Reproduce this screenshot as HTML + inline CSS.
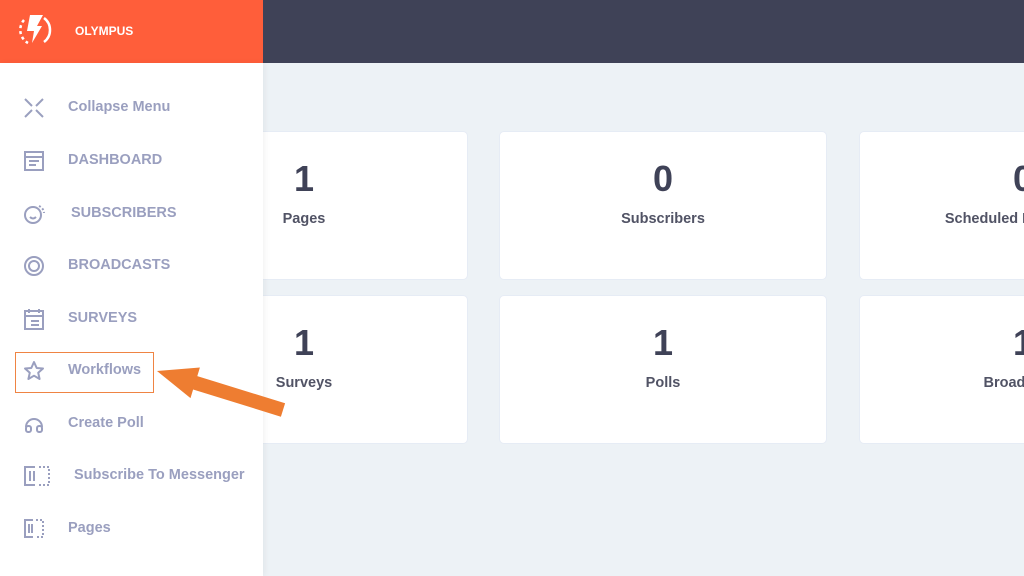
<!DOCTYPE html>
<html><head><meta charset="utf-8"><style>
*{margin:0;padding:0;box-sizing:border-box}
body{width:1024px;height:576px;overflow:hidden;background:#edf2f6;font-family:"Liberation Sans",sans-serif;position:relative}
.top{position:absolute;left:0;top:0;width:1024px;height:63px;background:#3f4257}
.logo{position:absolute;left:0;top:0;width:263px;height:63px;background:#ff5e3a}
.logo span{position:absolute;left:75px;top:24px;color:#fff;font-weight:bold;font-size:12px}
.wrap{position:absolute;left:0;top:0;width:1024px;height:576px;overflow:hidden}
.side{position:absolute;left:0;top:63px;width:263px;height:513px;background:#fff;box-shadow:2px 0 6px rgba(0,0,0,.05);z-index:2}
.item{position:absolute;left:0;height:20px;color:#9a9fbf;font-weight:bold;font-size:14.5px}
.item svg{position:absolute;left:23px;top:-1px}
.item span{position:absolute;top:1px;white-space:nowrap}
.card{position:absolute;background:#fff;border-radius:5px;border:1px solid #e6ecf5;text-align:center;color:#3f4257}
.card b{display:block;font-size:36px;margin-top:27px;line-height:40px}
.card i{display:block;font-style:normal;font-weight:bold;font-size:14.5px;margin-top:12px;color:#515365}
.hl{position:absolute;left:15px;top:289px;width:139px;height:41px;border:1.5px solid #ef8443}
</style></head><body>
<div class="wrap">
<div class="top"></div>
<div class="logo">
<svg width="50" height="50" style="position:absolute;left:10px;top:5px" viewBox="10 5 50 50"><path d="M24 20 A15 15 0 0 0 28 43" stroke="#fff" stroke-width="2.5" fill="none" stroke-dasharray="3 3"/><path d="M44 18 A15 15 0 0 1 44 42" stroke="#fff" stroke-width="2.5" fill="none"/><path d="M30 15 L43 15 L37 26 L42 26 L32 43 L34 31 L27 31 Z" fill="#fff"/></svg>
<span>OLYMPUS</span></div>
<div class="card" style="left:140px;top:131px;width:328px;height:149px"><b>1</b><i>Pages</i></div>
<div class="card" style="left:499px;top:131px;width:328px;height:149px"><b>0</b><i>Subscribers</i></div>
<div class="card" style="left:859px;top:131px;width:328px;height:149px"><b>0</b><i>Scheduled Broadcasts</i></div>
<div class="card" style="left:140px;top:295px;width:328px;height:149px"><b>1</b><i>Surveys</i></div>
<div class="card" style="left:499px;top:295px;width:328px;height:149px"><b>1</b><i>Polls</i></div>
<div class="card" style="left:859px;top:295px;width:328px;height:149px"><b>1</b><i>Broadcasts</i></div>
<div class="side">
<div class="item" style="top:35px"><svg width="22" height="22" viewBox="0 0 22 22" stroke="#9a9fbf" stroke-width="2" fill="none"><path d="M2 2L9 9M20 2L13 9M2 20L9 13M20 20L13 13"/></svg><span style="left:68px">Collapse Menu</span></div>
<div class="item" style="top:88px"><svg width="22" height="22" viewBox="0 0 22 22" stroke="#9a9fbf" stroke-width="2" fill="none"><rect x="2" y="2" width="18" height="18"/><path d="M2 7H20M6 11H16M6 15H13"/></svg><span style="left:68px">DASHBOARD</span></div>
<div class="item" style="top:141px"><svg width="24" height="22" viewBox="0 0 24 22" stroke="#9a9fbf" stroke-width="2" fill="none"><circle cx="10" cy="12" r="8"/><path d="M16 3 A8 8 0 0 1 21 10" stroke-dasharray="2 2"/><path d="M7 14 Q10 17 13 14"/></svg><span style="left:71px">SUBSCRIBERS</span></div>
<div class="item" style="top:193px"><svg width="22" height="22" viewBox="0 0 22 22" stroke="#9a9fbf" stroke-width="2" fill="none"><circle cx="11" cy="11" r="9"/><circle cx="11" cy="11" r="5"/></svg><span style="left:68px">BROADCASTS</span></div>
<div class="item" style="top:246px"><svg width="22" height="22" viewBox="0 0 22 22" stroke="#9a9fbf" stroke-width="2" fill="none"><rect x="2" y="3" width="18" height="18"/><path d="M6 1V5M16 1V5M2 8H20M8 13H16M8 17H16"/></svg><span style="left:68px">SURVEYS</span></div>
<div class="item" style="top:298px"><svg width="22" height="22" viewBox="0 0 22 22" stroke="#9a9fbf" stroke-width="2" fill="none" stroke-linejoin="round"><path d="M11 2L13.7 8L20 8.5L15.2 12.7L16.6 19L11 15.7L5.4 19L6.8 12.7L2 8.5L8.3 8Z"/></svg><span style="left:68px">Workflows</span></div>
<div class="item" style="top:351px"><svg width="22" height="22" viewBox="0 0 22 22" stroke="#9a9fbf" stroke-width="2" fill="none"><path d="M3 14A8 8 0 0 1 19 14"/><rect x="3" y="13" width="5" height="6" rx="2"/><rect x="14" y="13" width="5" height="6" rx="2"/></svg><span style="left:68px">Create Poll</span></div>
<div class="item" style="top:403px"><svg width="28" height="22" viewBox="0 0 28 22" stroke="#9a9fbf" stroke-width="2" fill="none"><path d="M12 2H2V20H12"/><path d="M7 6V16M11 6V16"/><path d="M16 2H26V20H16" stroke-dasharray="2 2"/></svg><span style="left:74px">Subscribe To Messenger</span></div>
<div class="item" style="top:456px"><svg width="22" height="22" viewBox="0 0 22 22" stroke="#9a9fbf" stroke-width="2" fill="none"><path d="M10 2H2V19H10"/><path d="M6 6V15M9 6V15"/><path d="M13 2H20V19H13" stroke-dasharray="2 2"/></svg><span style="left:68px">Pages</span></div>
<div class="hl"></div>
</div>
<svg width="1024" height="576" style="position:absolute;left:0;top:0;z-index:3" viewBox="0 0 1024 576"><polygon points="157,371 199.9,367.5 197.3,376.1 285.1,403.3 280.9,416.7 193.1,389.5 190.5,398.1" fill="#ee7d31"/></svg>
</div>
</body></html>
